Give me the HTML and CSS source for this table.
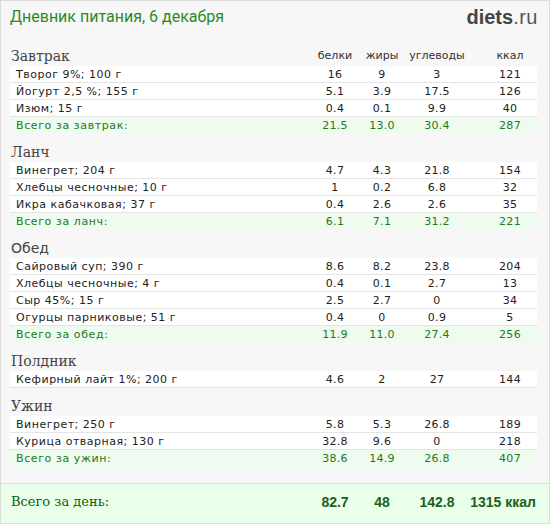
FILE: index.html
```html
<!DOCTYPE html>
<html lang="ru">
<head>
<meta charset="utf-8">
<title>Дневник питания</title>
<link rel="stylesheet" href="styles.css">
</head>
<body>
<div class="page">
  <header class="top">
    <h1 class="title">Дневник питания, 6 декабря</h1>
    <div class="logo"><span class="logo-main">diets</span><span class="logo-tld">.ru</span></div>
  </header>

  <section class="meal meal-first">
    <div class="meal-head"><span class="meal-name">Завтрак</span><span class="col">белки</span><span class="col">жиры</span><span class="col">углеводы</span><span class="col col-k">ккал</span></div>
    <div class="row"><span class="name">Творог 9%; 100 г</span><span class="n">16</span><span class="n">9</span><span class="n">3</span><span class="n n-k">121</span></div>
    <div class="row"><span class="name">Йогурт 2,5 %; 155 г</span><span class="n">5.1</span><span class="n">3.9</span><span class="n">17.5</span><span class="n n-k">126</span></div>
    <div class="row"><span class="name">Изюм; 15 г</span><span class="n">0.4</span><span class="n">0.1</span><span class="n">9.9</span><span class="n n-k">40</span></div>
    <div class="row sum"><span class="name">Всего за завтрак:</span><span class="n">21.5</span><span class="n">13.0</span><span class="n">30.4</span><span class="n n-k">287</span></div>
  </section>

  <section class="meal">
    <div class="meal-head"><span class="meal-name">Ланч</span></div>
    <div class="row"><span class="name">Винегрет; 204 г</span><span class="n">4.7</span><span class="n">4.3</span><span class="n">21.8</span><span class="n n-k">154</span></div>
    <div class="row"><span class="name">Хлебцы чесночные; 10 г</span><span class="n">1</span><span class="n">0.2</span><span class="n">6.8</span><span class="n n-k">32</span></div>
    <div class="row"><span class="name">Икра кабачковая; 37 г</span><span class="n">0.4</span><span class="n">2.6</span><span class="n">2.6</span><span class="n n-k">35</span></div>
    <div class="row sum"><span class="name">Всего за ланч:</span><span class="n">6.1</span><span class="n">7.1</span><span class="n">31.2</span><span class="n n-k">221</span></div>
  </section>

  <section class="meal">
    <div class="meal-head"><span class="meal-name meal-name-sans">Обед</span></div>
    <div class="row"><span class="name">Сайровый суп; 390 г</span><span class="n">8.6</span><span class="n">8.2</span><span class="n">23.8</span><span class="n n-k">204</span></div>
    <div class="row"><span class="name">Хлебцы чесночные; 4 г</span><span class="n">0.4</span><span class="n">0.1</span><span class="n">2.7</span><span class="n n-k">13</span></div>
    <div class="row"><span class="name">Сыр 45%; 15 г</span><span class="n">2.5</span><span class="n">2.7</span><span class="n">0</span><span class="n n-k">34</span></div>
    <div class="row"><span class="name">Огурцы парниковые; 51 г</span><span class="n">0.4</span><span class="n">0</span><span class="n">0.9</span><span class="n n-k">5</span></div>
    <div class="row sum"><span class="name">Всего за обед:</span><span class="n">11.9</span><span class="n">11.0</span><span class="n">27.4</span><span class="n n-k">256</span></div>
  </section>

  <section class="meal">
    <div class="meal-head"><span class="meal-name">Полдник</span></div>
    <div class="row"><span class="name">Кефирный лайт 1%; 200 г</span><span class="n">4.6</span><span class="n">2</span><span class="n">27</span><span class="n n-k">144</span></div>
  </section>

  <section class="meal">
    <div class="meal-head"><span class="meal-name">Ужин</span></div>
    <div class="row"><span class="name">Винегрет; 250 г</span><span class="n">5.8</span><span class="n">5.3</span><span class="n">26.8</span><span class="n n-k">189</span></div>
    <div class="row"><span class="name">Курица отварная; 130 г</span><span class="n">32.8</span><span class="n">9.6</span><span class="n">0</span><span class="n n-k">218</span></div>
    <div class="row sum"><span class="name">Всего за ужин:</span><span class="n">38.6</span><span class="n">14.9</span><span class="n">26.8</span><span class="n n-k">407</span></div>
  </section>

  <footer class="day">
    <span class="day-label">Всего за день:</span><span class="day-n">82.7</span><span class="day-n">48</span><span class="day-n">142.8</span><span class="day-n day-k">1315 ккал</span>
  </footer>
</div>
</body>
</html>
```

FILE: styles.css
```css
* { box-sizing: border-box; }
html, body { margin: 0; padding: 0; background: #ffffff; }

.page {
  width: 550px;
  height: 524px;
  border: 1px solid #dcdcdc;
  background: #f7f7f7;
  display: flex;
  flex-direction: column;
  font-family: "DejaVu Sans", Verdana, sans-serif;
  font-size: 11px;
  color: #222;
}

.top {
  display: flex;
  justify-content: space-between;
  align-items: flex-start;
  padding: 6px 11px 0 9px;
  height: 44px;
}

.title {
  margin: 0;
  font-family: Roboto, "Noto Sans", sans-serif;
  font-weight: 400;
  font-size: 16px;
  line-height: 20px;
  color: #2a8a2a;
}

.logo {
  font-family: "Liberation Sans", Arial, sans-serif;
  font-size: 20px;
  line-height: 20px;
  color: #4a4a4a;
}
.logo-main { font-weight: 700; color: #444; }
.logo-tld { font-weight: 400; color: #555; letter-spacing: 0.5px; }

.meal { margin: 7px 12px 0 9px; }
.meal-first { margin-top: 0; }

.meal-head, .row, .day {
  display: grid;
  grid-template-columns: 1fr 50px 44px 66px 67px;
  align-items: center;
}

.meal-head { height: 21px; }

.meal-name {
  font-family: "DejaVu Serif", serif;
  font-size: 14px;
  color: #444;
  padding-left: 1px;
}
.meal-name-sans { font-family: "DejaVu Sans", sans-serif; }

.col { text-align: center; color: #333; }
.col-k, .n-k { padding-left: 13px; }

.row {
  height: 17px;
  background: #ffffff;
  border-bottom: 1px solid #e4e4e4;
}
.name { padding-left: 6px; white-space: nowrap; letter-spacing: 0.5px; }
.n { text-align: center; letter-spacing: 0.3px; }

.row.sum {
  background: #eefbee;
  border-bottom: none;
  color: #217a21;
}
.row.sum .name { letter-spacing: 0.6px; }

.day {
  margin-top: auto;
  height: 40px;
  border-top: 1px solid #dcdcdc;
  background: #eaffea;
  padding: 0 12px 4px 9px;
  color: #0f5f0f;
}
.day-label {
  font-family: "DejaVu Serif", serif;
  font-size: 13px;
  padding-left: 1px;
}
.day-n {
  text-align: center;
  font-family: "Liberation Sans Narrow", "Liberation Sans", Arial, sans-serif;
  font-weight: 700;
  font-size: 14px;
  color: #1d5e1d;
}
.day-k { text-align: right; padding-right: 1px; white-space: nowrap; }
```
